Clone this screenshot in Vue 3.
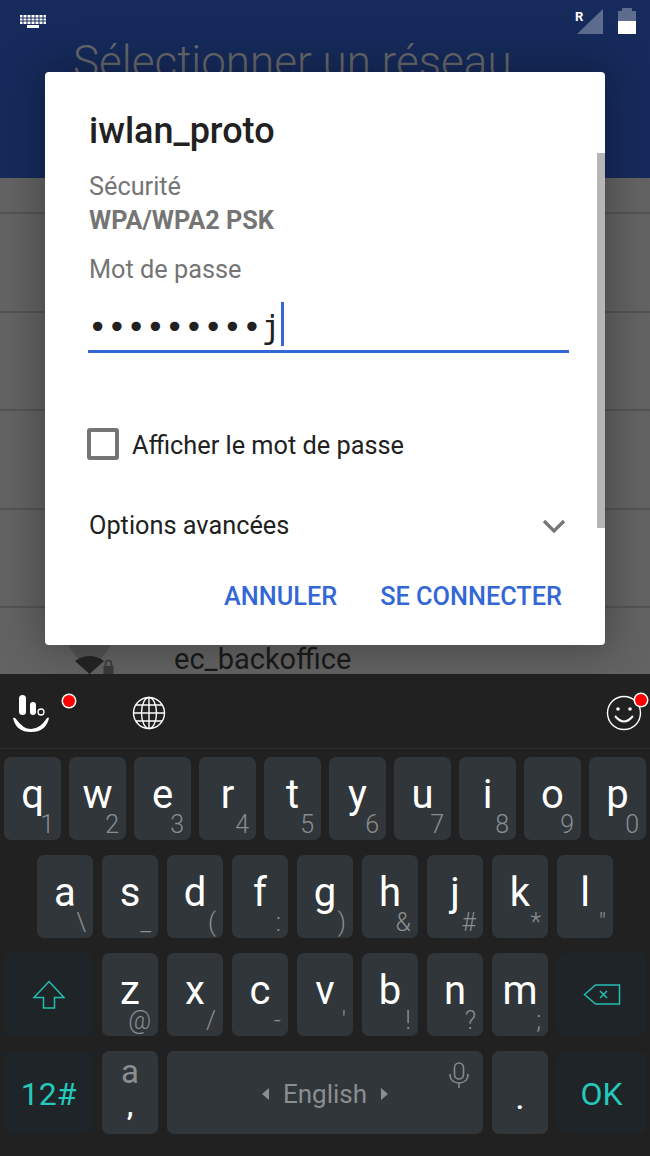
<script setup>
const rowOne = [
  ['q', '1'], ['w', '2'], ['e', '3'], ['r', '4'], ['t', '5'],
  ['y', '6'], ['u', '7'], ['i', '8'], ['o', '9'], ['p', '0']
];
const rowTwo = [
  ['a', '\\'], ['s', '_'], ['d', '('], ['f', ':'], ['g', ')'],
  ['h', '&'], ['j', '#'], ['k', '*'], ['l', '"']
];
const rowThree = [
  ['z', '@'], ['x', '/'], ['c', '-'], ['v', "'"], ['b', '!'], ['n', '?'], ['m', ';']
];
</script>

<template>
  <div class="screen">
    <header class="appbar">
      <div class="status">
        <svg class="status__kbd" width="26" height="14" viewBox="0 0 26 14">
          <path fill="#fff" d="M0 0h26v9H0zM7 10h12v3H7z" />
          <path stroke="#162b5c" stroke-width="1" d="M0 3h26M0 6h26M3 0v9M7 0v9M11 0v9M15 0v9M19 0v9M23 0v9" />
        </svg>
        <div class="status__right">
          <span class="status__r">R</span>
          <svg width="26" height="25" viewBox="0 0 26 25"><path fill="#5d6c8f" d="M26 0v25H0z" /></svg>
          <div class="battery">
            <div class="battery__nub"></div>
            <div class="battery__empty"></div>
            <div class="battery__fill"></div>
          </div>
        </div>
      </div>
      <div class="appbar__title">Sélectionner un réseau</div>
    </header>

    <div class="list">
      <div class="list__row list__row--first"></div>
      <div class="list__row"></div>
      <div class="list__row"></div>
      <div class="list__row"></div>
      <div class="list__row"></div>
      <div class="list__row list__row--net">
        <svg class="list__wifi" width="48" height="30" viewBox="0 0 48 30">
          <path fill="#535353" d="M1 0h45L23.500 30z" />
          <path fill="#242424" d="M9 17Q23.500 7 38 17L23.500 30z" />
          <path fill="none" stroke="#3a3a3a" stroke-width="1.600" d="M39.500 22v-2.500a3 3 0 0 1 6 0V22" />
          <path fill="#3a3a3a" d="M37.500 22h10v8h-10z" />
        </svg>
        <span class="list__name">ec_backoffice</span>
      </div>
    </div>

    <div class="dialog">
      <div class="dialog__scroll"></div>
      <h1 class="dialog__title">iwlan_proto</h1>
      <div class="dialog__label">Sécurité</div>
      <div class="dialog__value">WPA/WPA2 PSK</div>
      <div class="dialog__label dialog__label--pass">Mot de passe</div>
      <div class="field"><span class="field__text">•••••••••j</span><span class="field__cursor"></span></div>
      <div class="check">
        <span class="check__box"></span>
        <span class="check__text">Afficher le mot de passe</span>
      </div>
      <div class="advanced">
        <span>Options avancées</span>
        <svg class="advanced__chevron" width="24" height="14" viewBox="0 0 24 14">
          <path fill="none" stroke="#757575" stroke-width="3.200" d="M2 2l10 10L22 2" />
        </svg>
      </div>
      <div class="actions">
        <span>ANNULER</span>
        <span>SE CONNECTER</span>
      </div>
    </div>

    <div class="keyboard">
      <div class="toolbar">
        <div class="toolbar__left">
          <svg class="logo" width="38" height="38" viewBox="0 0 38 38">
            <rect x="6" y="0" width="7" height="20" rx="3.500" fill="#fff" />
            <rect x="17" y="7" width="6" height="13" rx="3" fill="#fff" />
            <circle cx="28" cy="17" r="3" fill="none" stroke="#fff" stroke-width="1.300" />
            <path fill="#fff" d="M0 23Q2 22 3 24Q10 34 18 34Q27 34 34 23Q35 22 36 23Q33 37 18 37Q3 37 0 23z" />
          </svg>
          <span class="dot dot--logo"></span>
          <svg class="globe" width="34" height="34" viewBox="0 0 34 34" fill="none" stroke="#fff" stroke-width="1.400">
            <circle cx="17" cy="17" r="15.500" />
            <ellipse cx="17" cy="17" rx="7.500" ry="15.500" />
            <path d="M17 1.500v31M1.500 17h31M4 9h26M4 25h26" />
          </svg>
        </div>
        <div class="smiley">
          <svg width="36" height="36" viewBox="0 0 36 36" fill="none" stroke="#fff" stroke-width="1.400">
            <circle cx="18" cy="18" r="16.500" />
            <circle cx="12" cy="14" r="1.800" fill="#fff" stroke="none" />
            <circle cx="24" cy="14" r="1.800" fill="#fff" stroke="none" />
            <path stroke-width="2" d="M9 21Q18 32 27 21" />
          </svg>
          <span class="dot dot--smiley"></span>
        </div>
      </div>

      <div class="keys">
        <div class="keys__row keys__row--top">
          <div v-for="k in rowOne" :key="k[0]" class="key key--top">
            <span class="key__main">{{ k[0] }}</span>
            <span class="key__sub">{{ k[1] }}</span>
          </div>
        </div>
        <div class="keys__row keys__row--home">
          <div v-for="k in rowTwo" :key="k[0]" class="key">
            <span class="key__main">{{ k[0] }}</span>
            <span class="key__sub">{{ k[1] }}</span>
          </div>
        </div>
        <div class="keys__row">
          <div class="key key--fn">
            <svg width="34" height="30" viewBox="0 0 34 30" fill="none" stroke="#25bdb1" stroke-width="1.500">
              <path d="M17 1.500L32 17.500H22.500V28H11.500V17.500H2z" />
            </svg>
          </div>
          <div v-for="k in rowThree" :key="k[0]" class="key">
            <span class="key__main">{{ k[0] }}</span>
            <span class="key__sub">{{ k[1] }}</span>
          </div>
          <div class="key key--fn">
            <svg width="38" height="21" viewBox="0 0 38 21" fill="none" stroke="#25bdb1" stroke-width="1.500">
              <path d="M1.500 10.500L12.500 1h24v19h-24zM17 7l7 7M24 7l-7 7" />
            </svg>
          </div>
        </div>
        <div class="keys__row">
          <div class="key key--fn key--teal">12#</div>
          <div class="key key--comma">
            <span class="key__alt">a</span>
            <span class="key__punct">,</span>
          </div>
          <div class="key key--space">
            <span class="arrow arrow--left"></span>
            <span class="key__lang">English</span>
            <span class="arrow arrow--right"></span>
            <svg class="key__mic" width="20" height="26" viewBox="0 0 20 26" fill="none" stroke="#85898b" stroke-width="1.600">
              <rect x="5.500" y="1" width="9" height="16" rx="4.500" />
              <path d="M1 12c0 6 4 9 9 9s9-3 9-9M10 21v5" />
            </svg>
          </div>
          <div class="key key--period"><span class="key__punct">.</span></div>
          <div class="key key--fn key--teal">OK</div>
        </div>
      </div>
    </div>
  </div>
</template>

<style scoped>
.screen {
  position: relative;
  width: 650px;
  height: 1156px;
  overflow: hidden;
  display: flex;
  flex-direction: column;
  background: #606060;
  font-family: Roboto, "Liberation Sans", sans-serif;
}

.appbar {
  height: 178px;
  flex: none;
  background: #162b5c;
}

.status {
  display: flex;
  justify-content: space-between;
  align-items: flex-start;
  padding: 8px 14px 0 20px;
  height: 34px;
}

.status__kbd {
  margin-top: 7px;
}

.status__right {
  display: flex;
  align-items: flex-start;
}

.status__right svg {
  margin: 1px 15px 0 -5px;
}

.status__r {
  color: #fff;
  font-size: 13px;
  font-weight: 700;
  line-height: 15px;
  margin-top: 1px;
  width: 7px;
}

.battery {
  width: 18px;
  height: 26px;
  display: flex;
  flex-direction: column;
  align-items: center;
}

.battery__nub {
  width: 10px;
  height: 3px;
  background: #5d6c8f;
  border-radius: 1px 1px 0 0;
}

.battery__empty {
  flex: 1;
  width: 100%;
  background: #5d6c8f;
}

.battery__fill {
  height: 13px;
  width: 100%;
  background: #fff;
}

.appbar__title {
  margin: -5px 0 0 73px;
  font-size: 44px;
  font-weight: 300;
  line-height: 50px;
  color: #66686b;
  white-space: nowrap;
}

.list {
  height: 496px;
  flex: none;
  background: #636363;
}

.list__row {
  height: 98.500px;
  box-sizing: border-box;
  border-bottom: 2px solid #545454;
}

.list__row--first {
  height: 36px;
}

.list__row--net {
  display: flex;
  align-items: flex-start;
  height: 65px;
  border-bottom: none;
  padding: 36px 0 0 66px;
}

.list__wifi {
  flex: none;
}

.list__name {
  margin: 2px 0 0 60px;
  font-size: 29px;
  line-height: 27px;
  color: #1a1a1a;
}

.dialog {
  position: absolute;
  z-index: 1;
  left: 45px;
  top: 72px;
  width: 560px;
  height: 573px;
  box-sizing: border-box;
  padding: 39px 36px 0 44px;
  background: #fff;
  border-radius: 4px;
  box-shadow: 0 0 40px 6px rgba(0, 0, 0, 0.28);
}

.dialog__scroll {
  position: absolute;
  right: 0;
  top: 81px;
  width: 8px;
  height: 375px;
  background: #b6b6b6;
}

.dialog__title {
  margin: 0;
  font-size: 36px;
  font-weight: 500;
  line-height: 40px;
  color: #212121;
}

.dialog__label {
  margin-top: 22px;
  font-size: 25.300px;
  line-height: 28px;
  color: #757575;
}

.dialog__label--pass {
  margin-top: 21px;
}

.dialog__value {
  margin-top: 6px;
  font-size: 25.300px;
  font-weight: 700;
  line-height: 28px;
  color: #757575;
}

.field {
  display: flex;
  align-items: flex-end;
  height: 57px;
  margin: 5px 0 0 -1px;
  padding-bottom: 4px;
  border-bottom: 3px solid #3367d6;
}

.field__text {
  margin-bottom: -3px;
  font-family: "DejaVu Sans Mono", monospace;
  font-size: 32px;
  line-height: 44px;
  color: #212121;
}

.field__cursor {
  width: 3px;
  height: 44px;
  background: #3367d6;
}

.check {
  display: flex;
  align-items: flex-start;
  gap: 13px;
  margin: 75px 0 0 -2px;
}

.check__box {
  width: 32px;
  height: 32px;
  box-sizing: border-box;
  border: 4px solid #757575;
  border-radius: 3px;
}

.check__text {
  margin-top: 2px;
  font-size: 25.300px;
  line-height: 32px;
  color: #212121;
}

.advanced {
  display: flex;
  justify-content: space-between;
  align-items: center;
  margin: 48px 3px 0 0;
  font-size: 25.300px;
  line-height: 32px;
  color: #212121;
}

.advanced__chevron {
  margin-bottom: 0;
}

.actions {
  display: flex;
  justify-content: flex-end;
  gap: 43px;
  margin: 41px 7px 0 0;
  font-size: 25.300px;
  font-weight: 500;
  line-height: 28px;
  color: #3367d6;
}

.keyboard {
  position: relative;
  z-index: 2;
  flex: 1;
  background: #212121;
}

.toolbar {
  display: flex;
  justify-content: space-between;
  align-items: center;
  height: 75px;
  box-sizing: border-box;
  padding: 4px 8px 0 13px;
  border-bottom: 1px solid #2e2e2e;
}

.toolbar__left {
  position: relative;
  display: flex;
  align-items: center;
}

.logo {
  margin-top: 2px;
}

.globe {
  margin-left: 81px;
}

.smiley {
  position: relative;
  display: flex;
}

.dot {
  position: absolute;
  width: 12px;
  height: 12px;
  border-radius: 50%;
  background: #f00;
  box-shadow: 0 0 0 1.500px #fff;
}

.dot--logo {
  left: 50px;
  top: 2px;
}

.dot--smiley {
  right: -5px;
  top: -1px;
}

.keys {
  display: flex;
  flex-direction: column;
  gap: 15px;
  padding: 8px 4px 0;
}

.keys__row {
  display: flex;
  gap: 9px;
}

.keys__row--top {
  gap: 8px;
}

.keys__row--home {
  padding-left: 33px;
}

.key {
  position: relative;
  flex: none;
  width: 56px;
  height: 83px;
  box-sizing: border-box;
  display: flex;
  justify-content: center;
  padding-top: 18px;
  border-radius: 7px;
  background: #30363a;
  color: #fff;
}

.key--top {
  width: 57px;
}

.key__main {
  font-size: 40px;
  line-height: 40px;
}

.key__sub {
  position: absolute;
  right: 7px;
  bottom: 4px;
  font-size: 25px;
  font-weight: 300;
  line-height: 22px;
  color: #8a8e90;
}

.key--fn {
  width: 89px;
  padding-top: 0;
  align-items: center;
  background: #1e2428;
}

.key--teal {
  padding-top: 3px;
  font-size: 32px;
  color: #25c9bb;
}

.key--comma {
  flex-direction: column;
  align-items: center;
  padding-top: 0;
}

.key__alt {
  margin-top: -11px;
  font-size: 33px;
  line-height: 36px;
  color: #8a8e90;
}

.key__punct {
  font-size: 30px;
  line-height: 30px;
  font-weight: 500;
  color: #fff;
}

.key--period {
  padding-top: 33px;
}

.key--space {
  width: 316px;
  align-items: center;
  gap: 14px;
  padding-top: 2px;
}

.key__lang {
  font-size: 26px;
  color: #8a8e90;
}

.arrow {
  width: 0;
  height: 0;
  border-top: 6px solid transparent;
  border-bottom: 6px solid transparent;
}

.arrow--left {
  border-right: 7px solid #8a8e90;
}

.arrow--right {
  border-left: 7px solid #8a8e90;
}

.key__mic {
  position: absolute;
  right: 14px;
  top: 11px;
}
</style>

<style>
html,
body {
  margin: 0;
  background: #212121;
}
</style>
